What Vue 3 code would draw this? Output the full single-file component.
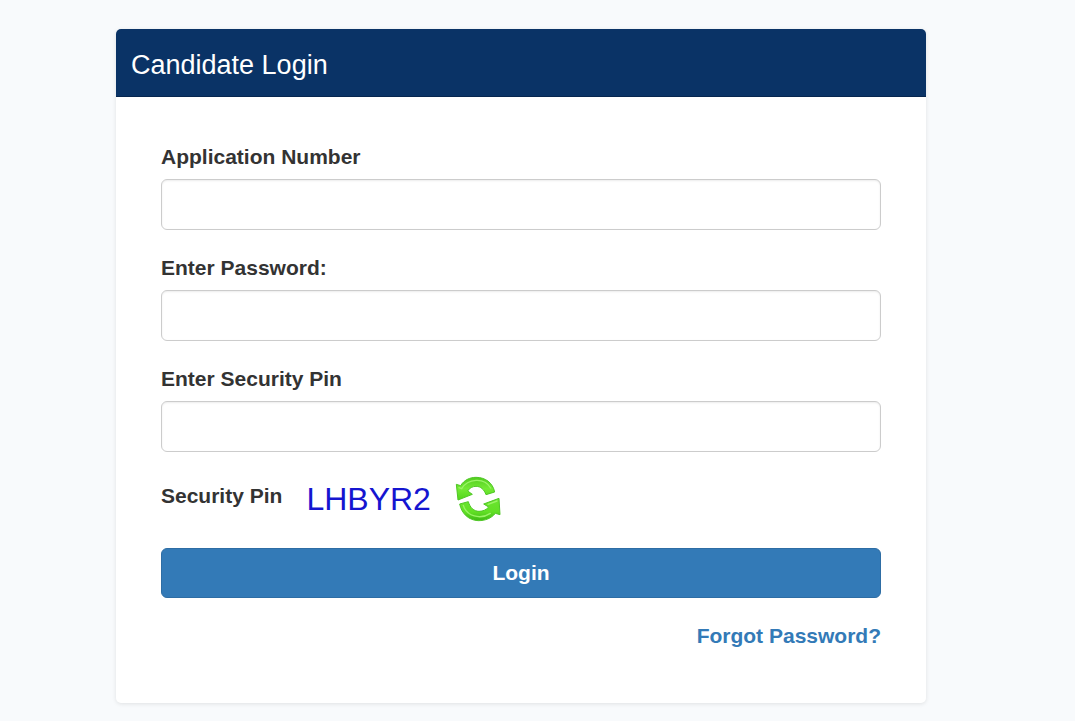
<script setup>
import { ref } from 'vue'

const fields = [
  { id: 'application', label: 'Application Number', type: 'text' },
  { id: 'password', label: 'Enter Password:', type: 'password' },
  { id: 'pin', label: 'Enter Security Pin', type: 'text' }
]
const form = ref({ application: '', password: '', pin: '' })
const captcha = ref('LHBYR2')

function refresh() {
  const chars = 'ABCDEFGHJKLMNPQRSTUVWXYZ23456789'
  captcha.value = Array.from({ length: 6 }, () => chars[Math.floor(Math.random() * chars.length)]).join('')
}
</script>

<template>
  <main class="page">
    <section class="card">
      <header class="card-header">
        <h1>Candidate Login</h1>
      </header>
      <form class="card-body" @submit.prevent>
        <div v-for="f in fields" :key="f.id" class="field">
          <label :for="f.id">{{ f.label }}</label>
          <input :id="f.id" v-model="form[f.id]" :type="f.type" autocomplete="off" />
        </div>
        <div class="captcha">
          <span class="captcha-label">Security Pin</span>
          <span class="captcha-code">{{ captcha }}</span>
          <button type="button" class="refresh" aria-label="Refresh security pin" @click="refresh">
            <svg viewBox="0 0 138 138" width="46" height="46" aria-hidden="true">
              <defs>
                <linearGradient id="green-top" x1="0" y1="0" x2="0" y2="1">
                  <stop offset="0" stop-color="#52cc20" />
                  <stop offset="0.5" stop-color="#74ea35" />
                  <stop offset="1" stop-color="#52d51c" />
                </linearGradient>
                <linearGradient id="green-bottom" x1="0" y1="0" x2="0" y2="1">
                  <stop offset="0" stop-color="#6be430" />
                  <stop offset="0.6" stop-color="#62e025" />
                  <stop offset="1" stop-color="#3cb913" />
                </linearGradient>
              </defs>
              <g stroke="#4fc725" stroke-width="3" stroke-linejoin="round">
                <path fill="url(#green-top)" d="M4 25 L17 29 C27 12 45 4 63 4 C91 4 113 20 119 48 L93 56 C87 40 77 31 63 31 C53 31 43 36 38 45 L52 55 L9 72 Z" />
                <path fill="url(#green-bottom)" d="M132 67 L135 116 L121 112 C109 127 91 134 70 134 C41 133 20 113 14 84 L40 77 C45 95 57 106 72 106 C85 106 94 101 101 93 L86 84 Z" />
              </g>
              <g fill="none" stroke="#9af466" stroke-width="4" stroke-linecap="round">
                <path d="M12 35 L20 38 C38 7 88 3 107 36" />
                <path d="M25 88 C35 121 76 132 106 112" />
                <path d="M99 85 L126 75" />
              </g>
            </svg>
          </button>
        </div>
        <button type="submit" class="login">Login</button>
        <div class="forgot"><a href="#">Forgot Password?</a></div>
      </form>
    </section>
  </main>
</template>

<style>
body {
  margin: 0;
  background: #f8fafc;
}
</style>

<style scoped>
.page {
  padding: 29px 149px 18px 116px;
  font: 21px/30px "Liberation Sans", Arial, sans-serif;
  color: #333;
}
.card {
  background: #fff;
  border-radius: 5px;
  box-shadow: 0 1px 4px rgba(0, 0, 0, 0.1);
}
.card-header {
  padding: 21px 15px 16px;
  background: #0a3366;
  border-bottom: 1px solid #06264f;
  border-radius: 5px 5px 0 0;
}
h1 {
  margin: 0;
  font-size: 27px;
  line-height: 30px;
  font-weight: 400;
  color: #fff;
}
.card-body {
  padding: 45px 45px 52px;
}
.field {
  display: flex;
  flex-direction: column;
  gap: 7px;
  margin-bottom: 23px;
}
label,
.captcha-label {
  font-weight: 700;
}
input {
  box-sizing: border-box;
  width: 100%;
  height: 51px;
  padding: 9px 18px;
  border: 1px solid #ccc;
  border-radius: 6px;
  background: #fff;
  box-shadow: inset 0 1px 2px rgba(0, 0, 0, 0.08);
  font: inherit;
  color: #555;
}
.captcha {
  display: flex;
  align-items: center;
  height: 48px;
  margin-bottom: 25px;
}
.captcha-label {
  padding-bottom: 6px;
}
.captcha-code {
  margin: 0 24px;
  font-size: 32px;
  color: #1515d0;
}
.refresh {
  display: flex;
  padding: 0;
  border: 0;
  background: none;
  cursor: pointer;
}
.login {
  display: block;
  width: 100%;
  height: 50px;
  border: 1px solid #2e6da4;
  border-radius: 6px;
  background: #337ab7;
  color: #fff;
  font: inherit;
  font-weight: 700;
  cursor: pointer;
}
.forgot {
  margin-top: 23px;
  text-align: right;
}
.forgot a {
  font-weight: 700;
  color: #337ab7;
  text-decoration: none;
}
</style>
